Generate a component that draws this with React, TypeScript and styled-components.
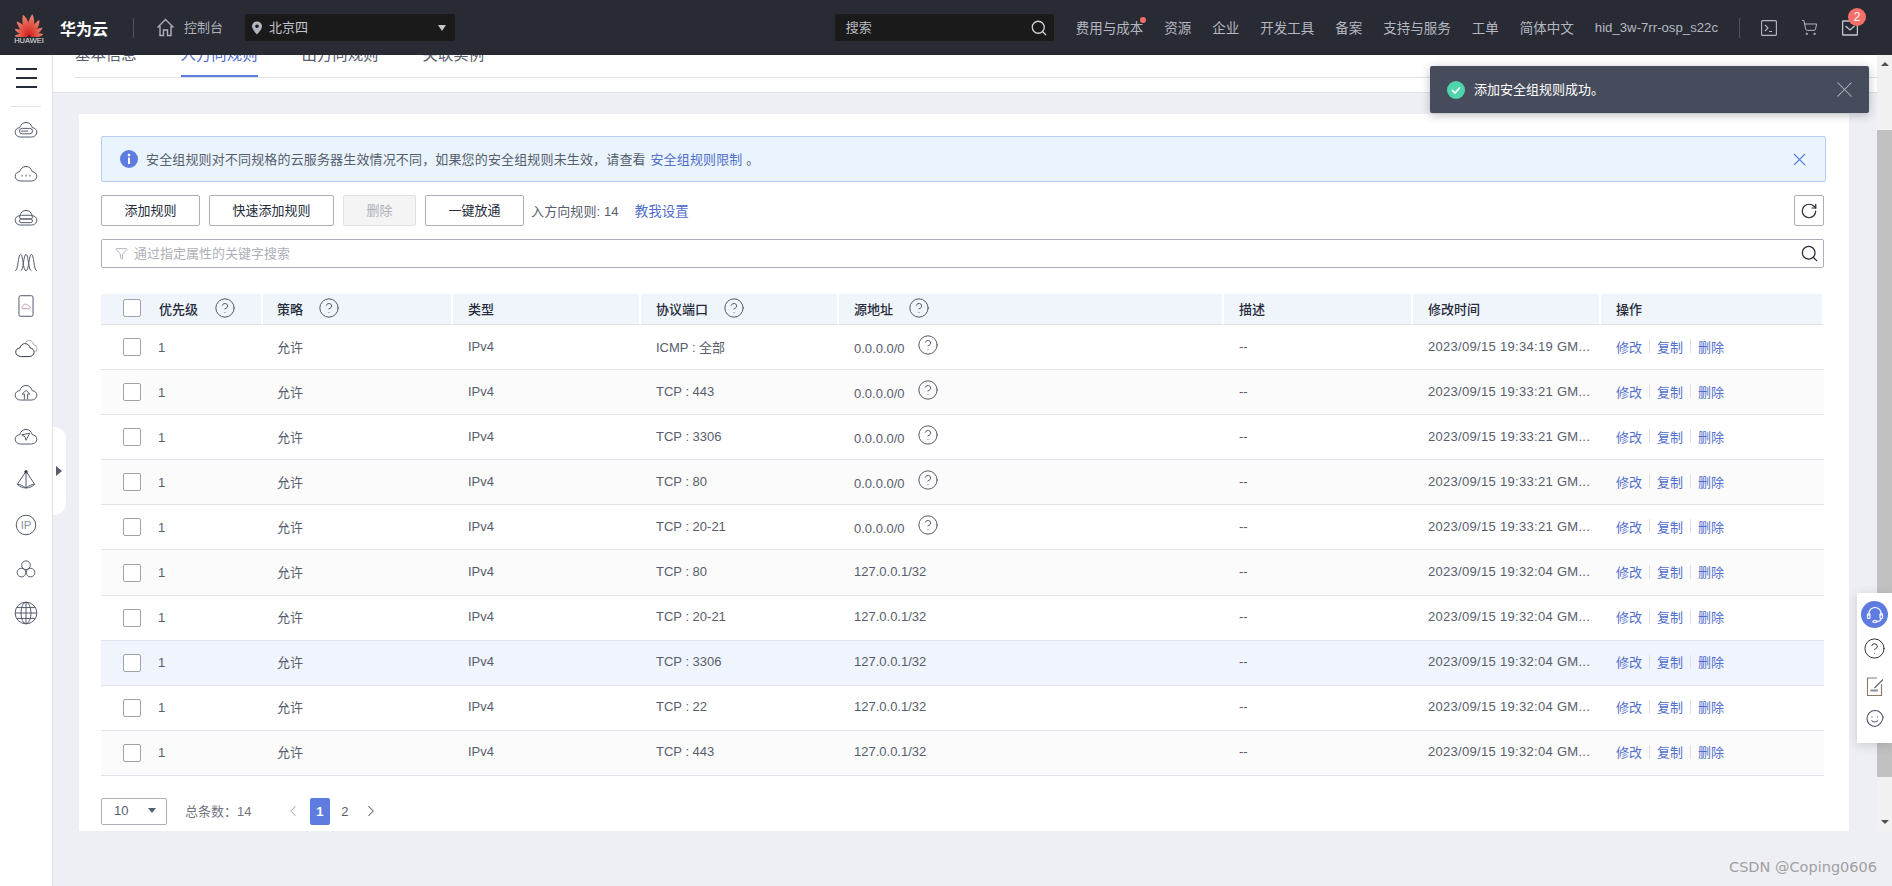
import React from "react";
import styled, { createGlobalStyle } from "styled-components";
import { CircleHelp, Funnel, X, RotateCw, ChevronLeft, ChevronRight, Search, ShoppingCart } from "lucide-react";

const Global = createGlobalStyle`
  html, body { margin: 0; padding: 0; height: 100%; overflow: hidden; }
  body { font-family: "Liberation Sans", "Noto Sans CJK SC", sans-serif; font-size: 13px; color: #575d6c; }
  * { box-sizing: border-box; }
`;

const Page = styled.div`width: 1892px; height: 886px; display: flex; flex-direction: column; position: relative; overflow: hidden; background: #eeeff4;`;

/* header */
const Header = styled.header`height: 55px; flex: none; background: #282b33; display: flex; align-items: center; padding: 0 34px 0 15px; position: relative; z-index: 3;`;
const Logo = styled.div`width: 28px; display: flex; flex-direction: column; align-items: center; margin-top: 2px;`;
const LogoWord = styled.span`font-size: 7.5px; line-height: 8px; color: #e8e8e8; letter-spacing: 0;`;
const Brand = styled.span`font-size: 16px; font-weight: 700; color: #fff; margin-left: 17px;`;
const VSep = styled.span<{ $ml: number }>`width: 1px; height: 20px; background: #4f535e; margin-left: ${p => p.$ml}px; flex: none;`;
const ConsoleLink = styled.span`display: flex; align-items: center; gap: 9px; margin-left: 22px; color: #aeb1ba; font-size: 13px;`;
const LiftedText = styled.span`margin-bottom: 2px;`;
const RegionSelect = styled.div`width: 210px; height: 27px; margin-left: 22px; background: #1a1a1a; border-radius: 2px; display: flex; align-items: center; padding: 0 9px 0 6px; color: #c4c6cc; font-size: 13px; gap: 6px;`;
const Caret = styled.span`margin-left: auto; width: 0; height: 0; border-left: 4px solid transparent; border-right: 4px solid transparent; border-top: 6px solid #c4c6cc;`;
const TopSearch = styled.div`width: 219px; height: 27px; margin-left: auto; background: #1a1a1a; border-radius: 2px; display: flex; align-items: center; justify-content: space-between; padding: 0 6px 0 11px; color: #b9bbc2; font-size: 13px;`;
const Nav = styled.nav`display: flex; align-items: center; gap: 21px; margin-left: 22px; color: #b4b7c0; font-size: 13.5px; white-space: nowrap;`;
const NavItem = styled.span`position: relative; margin-bottom: 1px;`;
const Account = styled(NavItem)`font-size: 13.2px;`;
const Dot = styled.i`position: absolute; right: -3px; top: 0px; width: 6px; height: 6px; border-radius: 50%; background: #f66f6a;`;
const TopIcons = styled.div`display: flex; align-items: center; gap: 24px; margin-left: 21px;`;
const IconWrap = styled.span`position: relative; display: flex; color: #b4b7c0;`;
const Badge = styled.i`position: absolute; left: 6px; top: -12px; width: 18px; height: 18px; border-radius: 50%; background: #f66f6a; color: #fff; font-style: normal; font-size: 12px; line-height: 18px; text-align: center;`;

/* body */
const Body = styled.div`flex: 1; display: flex; min-height: 0;`;
const Sidebar = styled.aside`width: 53px; flex: none; background: #fff; border-right: 1px solid #dfe1e6; display: flex; flex-direction: column; align-items: center; padding-top: 13px;`;
const Burger = styled.div`width: 21px; height: 20px; display: flex; flex-direction: column; justify-content: space-between;`;
const BurgerBar = styled.i`display: block; height: 2px; background: #252b3a;`;
const SideRule = styled.div`width: 30px; height: 1px; background: #dfe1e6; margin: 18px 0 1px;`;
const SideSlot = styled.div`height: 43.9px; width: 100%; display: flex; align-items: center; justify-content: center;`;

const Main = styled.main`flex: 1; min-width: 0; display: flex; flex-direction: column;`;
const TabsBar = styled.div`height: 37px; flex: none; background: #fff; border-bottom: 1px solid #dfe1e6; padding-left: 22px; overflow: hidden; box-sizing: content-box;`;
const TabStrip = styled.div`height: 23px; display: flex; gap: 44px; border-bottom: 1px solid #dfe1e6;`;
const Tab = styled.div<{ $on?: boolean }>`height: 29px; margin-top: -7px; font-size: 15.4px; line-height: 14px; white-space: nowrap; color: ${p => (p.$on ? "#526ecc" : "#575d6c")}; border-bottom: 2px solid ${p => (p.$on ? "#5e7ce0" : "transparent")};`;

const Content = styled.div`flex: 1; padding: 21px 28px 0 26px; min-height: 0;`;
const Card = styled.section`background: #fff; height: 717px; padding: 22px 25px 0 22px;`;

const Alert = styled.div`height: 46px; margin-right: -2px; background: #e9f4fe; border: 1px solid #b9cbf5; border-radius: 2px; display: flex; align-items: center; padding: 0 15px 0 18px; gap: 8px;`;
const AlertText = styled.span`flex: 1; font-size: 13px; letter-spacing: 0.15px; margin-bottom: 2px;`;
const TextLink = styled.a`color: #526ecc;`;
const AlertLink = styled(TextLink)`margin-left: 1px;`;

const Toolbar = styled.div`display: flex; align-items: center; gap: 9px; margin-top: 13px; height: 31px;`;
const Btn = styled.button<{ $off?: boolean }>`height: 31px; padding: 0 22.5px 3px; font: inherit; border-radius: 2px; white-space: nowrap; background: ${p => (p.$off ? "#f4f4f4" : "#fff")}; border: 1px solid ${p => (p.$off ? "#dfe1e6" : "#adb0b8")}; color: ${p => (p.$off ? "#adb0b8" : "#252b3a")};`;
const Count = styled.span`margin: 0 0 1px -2px; letter-spacing: 0.1px;`;
const HelpLink = styled(TextLink)`margin: 0 0 1px 7px; font-size: 13.5px;`;
const RefreshBtn = styled.button`margin-left: auto; width: 30px; height: 31px; border: 1px solid #adb0b8; border-radius: 2px; background: #fff; display: flex; align-items: center; justify-content: center; padding: 0; color: #252b3a;`;

const FilterBox = styled.div`height: 29px; margin-top: 13px; border: 1px solid #adb0b8; border-radius: 2px; display: flex; align-items: center; padding: 0 4px 0 13px; gap: 6px; color: #adb0b8;`;
const Placeholder = styled.span`flex: 1; margin-bottom: 2px;`;

const Table = styled.table`width: 1723px; margin-top: 26px; border-collapse: separate; border-spacing: 0; table-layout: fixed;`;
const HeadCell = styled.th`height: 31px; background: #f0f4fb; border-right: 2px solid #fff; border-bottom: 1px solid #dfe1e6; padding: 0 0 2px 15px; text-align: left; font-weight: 500; color: #252b3a; white-space: nowrap; &:nth-child(2) { padding-left: 14px; }`;
const Cell = styled.td`height: 45.1px; border-bottom: 1px solid #e3e3ec; padding: 0 0 2px 15px; white-space: nowrap; &:nth-child(2) { padding-left: 14px; }`;
const Row = styled.tr<{ $tone: string }>`background: ${p => p.$tone};`;
const CellFlex = styled.div<{ $gap: number }>`display: flex; align-items: center; gap: ${p => p.$gap}px;`;
const PriorityCell = styled(CellFlex)`margin-top: 2px;`;
const Check = styled.span`display: block; width: 18px; height: 18px; flex: none; margin-left: 7px; border: 1px solid #9fa2ab; border-radius: 2px; background: #fff;`;
const HelpDot = styled.span<{ $lift?: boolean }>`display: flex; color: #4c5263; margin-left: -2px; margin-bottom: ${p => (p.$lift ? 2 : 0)}px;`;
const SourceText = styled.span<{ $low?: boolean }>`margin-top: ${p => (p.$low ? 5 : 0)}px;`;
const TimeText = styled.span`letter-spacing: 0.3px;`;
const Ops = styled.div`display: flex; align-items: center;`;
const OpSep = styled.i`width: 1px; height: 14px; background: #dfe1e6; margin: 0 7px;`;

const Pager = styled.div`display: flex; align-items: center; height: 27px; margin-top: 22px;`;
const SizeSelect = styled.div`width: 66px; height: 27px; border: 1px solid #adb0b8; border-radius: 2px; display: flex; align-items: center; justify-content: space-between; padding: 0 10px 1px 12px; color: #575d6c;`;
const SmallCaret = styled.i`width: 0; height: 0; border-left: 4px solid transparent; border-right: 4px solid transparent; border-top: 5px solid #575d6c;`;
const Total = styled.span`margin: 0 0 2px 18px; color: #71757f;`;
const PageCtl = styled.span<{ $dim?: boolean }>`display: flex; margin: 0 5px; color: ${p => (p.$dim ? "#adb0b8" : "#575d6c")};`;
const PageNo = styled.span<{ $on?: boolean }>`width: 20px; height: 27px; margin: 0 2.5px; border-radius: 2px; display: flex; align-items: center; justify-content: center; background: ${p => (p.$on ? "#5e7ce0" : "transparent")}; color: ${p => (p.$on ? "#fff" : "#575d6c")}; font-weight: ${p => (p.$on ? 700 : 400)};`;
const PagerNav = styled.div`display: flex; align-items: center; margin-left: 28px;`;

const Scrollbar = styled.div`width: 15px; flex: none; height: 776px; background: #f1f1f1; display: flex; flex-direction: column; align-items: center;`;
const ScrollArrow = styled.i<{ $down?: boolean }>`width: 0; height: 0; flex: none; border-left: 4px solid transparent; border-right: 4px solid transparent; ${p => (p.$down ? "border-top: 4px solid #505050; margin-top: 43px;" : "border-bottom: 4px solid #505050; margin: 7px 0 64px;")}`;
const ScrollThumb = styled.div`width: 100%; height: 647px; flex: none; background: #c1c1c1;`;

/* overlays */
const Toast = styled.div`position: absolute; left: 1430px; top: 66px; width: 439px; height: 47px; background: #474c5c; border-radius: 2px; box-shadow: 0 2px 10px rgba(37, 43, 58, 0.3); display: flex; align-items: center; padding: 0 11px 0 17px; color: #fff; z-index: 4;`;
const ToastText = styled.span`flex: 1; margin: 0 0 3px 9px; font-size: 13px;`;
const EdgeToggle = styled.div`position: absolute; left: 53px; top: 427px; width: 13px; height: 88px; background: #fff; border-radius: 0 12px 12px 0; display: flex; align-items: center; padding-left: 3px;`;
const EdgeArrow = styled.i`width: 0; height: 0; border-top: 5px solid transparent; border-bottom: 5px solid transparent; border-left: 6px solid #575d6c;`;
const FloatPanel = styled.div`position: absolute; left: 1857px; top: 593px; width: 35px; height: 150px; background: #fff; box-shadow: 0 2px 10px rgba(37, 43, 58, 0.18); display: flex; flex-direction: column; align-items: center; padding-top: 8px; z-index: 2;`;
const FloatCircle = styled.div`width: 27px; height: 27px; border-radius: 50%; background: #5e7ce0; display: flex; align-items: center; justify-content: center;`;
const FloatIcon = styled.div<{ $mt: number }>`display: flex; margin-top: ${p => p.$mt}px;`;
const Watermark = styled.div`position: absolute; right: 15px; top: 858px; font-family: "DejaVu Sans", sans-serif; font-size: 14.5px; line-height: 18px; color: #a0a0a2; z-index: 2;`;

const petals: [number, number][] = [[-84, 0.85], [-60, 0.95], [-36, 1.15], [-12, 1.35], [12, 1.35], [36, 1.15], [60, 0.95], [84, 0.85]];
const Petals = () => (
  <svg width="28" height="25" viewBox="0 0 28 25">
    <defs>
      <linearGradient id="petal" x1="0" y1="0" x2="0" y2="1">
        <stop offset="0" stopColor="#f08a72" />
        <stop offset="1" stopColor="#d31f1b" />
      </linearGradient>
    </defs>
    {petals.map(([a, s]) => (
      <path key={a} transform={`translate(14 24.5) rotate(${a}) translate(0 -1) scale(${s})`} d="M0 0C-3.2-4-3.4-10-1.1-16C2.4-12 3.2-4.5 0 0Z" fill="url(#petal)" />
    ))}
  </svg>
);

const CLOUD = "M7 18.5C3.8 18.5 2 16.3 2 14C2 11.6 3.9 9.9 6.2 9.9C7 7 9.2 5 12 5C14.8 5 17 7 17.8 9.9C20.1 9.9 22 11.6 22 14C22 16.3 20.2 18.5 17 18.5Z";
const side = { fill: "none", stroke: "#50576b", strokeWidth: 0.9 };
const SideSvg = ({ children }: { children: React.ReactNode }) => (
  <svg width="26" height="26" viewBox="0 0 24 24" {...side}>{children}</svg>
);
const sideIcons: React.ReactNode[] = [
  <SideSvg key="a"><path d={CLOUD} /><rect x="6" y="10.5" width="12" height="5" rx="2.5" /><path d="M7.5 13H14" /></SideSvg>,
  <SideSvg key="b"><path d={CLOUD} /><path d="M8 13.5h.9M11.6 13.5h.9M15.2 13.5h.9" strokeWidth="1.4" /></SideSvg>,
  <SideSvg key="c"><path d={CLOUD} /><rect x="6" y="9.5" width="12" height="3.4" rx="1.7" /><rect x="6" y="12.9" width="12" height="3.4" rx="1.7" /></SideSvg>,
  <SideSvg key="d"><path d="M2 20C5 20 4.5 5 7 5S9 20 12 20M7 20C10 20 9.5 5 12 5S14 20 17 20M12 20C15 20 14.5 5 17 5S19 20 22 20" /></SideSvg>,
  <SideSvg key="e"><rect x="5.5" y="2.5" width="13" height="19" rx="1.5" /><path d="M9 14.5C7.6 14.5 7.6 12.4 9 12.2C9.4 9.7 13.6 9.7 14.6 12.2C16.4 12.3 16.4 14.5 15 14.5Z" stroke="#c49aa8" /></SideSvg>,
  <SideSvg key="f"><path d="M8 19C4.5 19 2.5 17 2.5 15C2.5 12.8 4 11.2 6.2 11.2C7 8.5 9 7 11 7C13.4 7 15.2 8.6 16 11.2C18 11.2 19.5 12.8 19.5 15C19.5 17 17.5 19 15 19Z" stroke="#2f3547" /><path d="M11 7C11.8 5 13.5 4 15.5 4.2C17.5 4.4 18.5 6 19 8C21 8.2 22 10 22 11.8C22 13.5 21 15 19.5 15.6" stroke="#a6a9b3" /></SideSvg>,
  <SideSvg key="g"><path d={CLOUD} /><path d="M10.5 18V13H8.5L12 9.5L15.5 13H13.5V18" /></SideSvg>,
  <SideSvg key="h"><path d={CLOUD} /><path d="M8 10L15.5 8.5L12 15L11 11.8Z" /></SideSvg>,
  <SideSvg key="i"><path d="M12 3L4 15C8 19.5 16 19.5 20 15ZM12 3V18.5M4 15C7 15 9 16.5 12 18.5C15 16.5 17 15 20 15" /><circle cx="12" cy="3.5" r="1.2" fill="#252b3a" /></SideSvg>,
  <SideSvg key="j"><circle cx="12" cy="12" r="9" /><text x="12" y="15.7" textAnchor="middle" fontSize="10.5" stroke="none" fill="#8a8fa0" fontFamily="Liberation Sans">IP</text></SideSvg>,
  <SideSvg key="k"><circle cx="12" cy="8.5" r="4" /><circle cx="7.8" cy="15.3" r="4" /><circle cx="16.2" cy="15.3" r="4" /></SideSvg>,
  <SideSvg key="l"><circle cx="12" cy="12" r="10" /><ellipse cx="12" cy="12" rx="4.6" ry="10" /><path d="M2 12H22M3.4 7H20.6M3.4 17H20.6M12 2V22" /></SideSvg>,
];

type R = { port: string; src: string; time: string; help?: boolean };
const rows: R[] = [
  { port: "ICMP : 全部", src: "0.0.0.0/0", time: "2023/09/15 19:34:19 GM...", help: true },
  { port: "TCP : 443", src: "0.0.0.0/0", time: "2023/09/15 19:33:21 GM...", help: true },
  { port: "TCP : 3306", src: "0.0.0.0/0", time: "2023/09/15 19:33:21 GM...", help: true },
  { port: "TCP : 80", src: "0.0.0.0/0", time: "2023/09/15 19:33:21 GM...", help: true },
  { port: "TCP : 20-21", src: "0.0.0.0/0", time: "2023/09/15 19:33:21 GM...", help: true },
  { port: "TCP : 80", src: "127.0.0.1/32", time: "2023/09/15 19:32:04 GM..." },
  { port: "TCP : 20-21", src: "127.0.0.1/32", time: "2023/09/15 19:32:04 GM..." },
  { port: "TCP : 3306", src: "127.0.0.1/32", time: "2023/09/15 19:32:04 GM..." },
  { port: "TCP : 22", src: "127.0.0.1/32", time: "2023/09/15 19:32:04 GM..." },
  { port: "TCP : 443", src: "127.0.0.1/32", time: "2023/09/15 19:32:04 GM..." },
];
const colWidths = [162, 190, 188, 198, 385, 189, 188, 223];
const navItems = ["资源", "企业", "开发工具", "备案", "支持与服务", "工单", "简体中文"];
const toneOf = (i: number) => (i === 7 ? "#f0f4fc" : i % 2 ? "#fbfbfb" : "#fff");
const Q = ({ lift }: { lift?: boolean }) => <HelpDot $lift={lift}><CircleHelp size={22} strokeWidth={1.05} /></HelpDot>;

export default function App() {
  return (
    <Page>
      <Global />
      <Header>
        <Logo><Petals /><LogoWord>HUAWEI</LogoWord></Logo>
        <Brand>华为云</Brand>
        <VSep $ml={25} />
        <ConsoleLink>
          <svg width="19" height="19" viewBox="0 0 18 19" fill="none" stroke="#aeb1ba" strokeWidth="1.4"><path d="M1 9.5L9 1.5L17 9.5M3.5 8V17.5H7V12H11V17.5H14.5V8" /></svg>
          <LiftedText>控制台</LiftedText>
        </ConsoleLink>
        <RegionSelect>
          <svg width="12" height="14" viewBox="0 0 12 14"><path d="M6 0.5C3 0.5 1 2.7 1 5.3C1 8.5 6 13.5 6 13.5S11 8.5 11 5.3C11 2.7 9 0.5 6 0.5Z" fill="#b3b6bf" /><circle cx="6" cy="5.2" r="1.8" fill="#1a1a1a" /></svg>
          <LiftedText>北京四</LiftedText>
          <Caret />
        </RegionSelect>
        <TopSearch><LiftedText>搜索</LiftedText><Search size={18} strokeWidth={1.7} color="#d0d2d8" /></TopSearch>
        <Nav>
          <NavItem>费用与成本<Dot /></NavItem>
          {navItems.map(n => <NavItem key={n}>{n}</NavItem>)}
          <Account>hid_3w-7rr-osp_s22c</Account>
        </Nav>
        <VSep $ml={21} />
        <TopIcons>
          <IconWrap><svg width="16" height="16" viewBox="0 0 16 16" fill="none" stroke="#b4b7c0" strokeWidth="1.1"><rect x="0.6" y="0.6" width="14.8" height="14.8" rx="1" /><path d="M4 5L7 8L4 11M8 11.5H11" /></svg></IconWrap>
          <IconWrap><ShoppingCart size={17} strokeWidth={1.4} /></IconWrap>
          <IconWrap>
            <svg width="16" height="16" viewBox="0 0 16 16" fill="none" stroke="#c4c6cc" strokeWidth="1.3"><rect x="0.6" y="1" width="14.8" height="14" rx="0.5" /><path d="M3.5 6L8 10L12.5 6" /></svg>
            <Badge>2</Badge>
          </IconWrap>
        </TopIcons>
      </Header>
      <Body>
        <Sidebar>
          <Burger><BurgerBar /><BurgerBar /><BurgerBar /></Burger>
          <SideRule />
          {sideIcons.map((ic, i) => <SideSlot key={i}>{ic}</SideSlot>)}
        </Sidebar>
        <Main>
          <TabsBar>
            <TabStrip>
              <Tab>基本信息</Tab>
              <Tab $on>入方向规则</Tab>
              <Tab>出方向规则</Tab>
              <Tab>关联实例</Tab>
            </TabStrip>
          </TabsBar>
          <Content>
            <Card>
              <Alert>
                <svg width="18" height="18" viewBox="0 0 18 18"><circle cx="9" cy="9" r="9" fill="#5e7ce0" /><rect x="8" y="7.5" width="2" height="6.5" fill="#fff" /><circle cx="9" cy="5" r="1.3" fill="#fff" /></svg>
                <AlertText>安全组规则对不同规格的云服务器生效情况不同，如果您的安全组规则未生效，请查看 <AlertLink>安全组规则限制</AlertLink> 。</AlertText>
                <X size={21} strokeWidth={1.3} color="#5e7ce0" />
              </Alert>
              <Toolbar>
                <Btn>添加规则</Btn>
                <Btn>快速添加规则</Btn>
                <Btn $off>删除</Btn>
                <Btn>一键放通</Btn>
                <Count>入方向规则: 14</Count>
                <HelpLink>教我设置</HelpLink>
                <RefreshBtn><RotateCw size={18} strokeWidth={1.6} /></RefreshBtn>
              </Toolbar>
              <FilterBox>
                <Funnel size={13} strokeWidth={1.2} color="#8a8e99" />
                <Placeholder>通过指定属性的关键字搜索</Placeholder>
                <Search size={19} strokeWidth={1.6} color="#252b3a" />
              </FilterBox>
              <Table>
                <colgroup>{colWidths.map((w, i) => <col key={i} width={w} />)}</colgroup>
                <thead>
                  <tr>
                    <HeadCell><CellFlex $gap={18}><Check />优先级<Q /></CellFlex></HeadCell>
                    <HeadCell><CellFlex $gap={17}>策略<Q /></CellFlex></HeadCell>
                    <HeadCell>类型</HeadCell>
                    <HeadCell><CellFlex $gap={17}>协议端口<Q /></CellFlex></HeadCell>
                    <HeadCell><CellFlex $gap={17}>源地址<Q /></CellFlex></HeadCell>
                    <HeadCell>描述</HeadCell>
                    <HeadCell>修改时间</HeadCell>
                    <HeadCell>操作</HeadCell>
                  </tr>
                </thead>
                <tbody>
                  {rows.map((r, i) => (
                    <Row key={i} $tone={toneOf(i)}>
                      <Cell><PriorityCell $gap={17}><Check />1</PriorityCell></Cell>
                      <Cell>允许</Cell>
                      <Cell>IPv4</Cell>
                      <Cell>{r.port}</Cell>
                      <Cell>
                        <CellFlex $gap={14}>
                          <SourceText $low={r.help}>{r.src}</SourceText>
                          {r.help && <Q lift />}
                        </CellFlex>
                      </Cell>
                      <Cell>--</Cell>
                      <Cell><TimeText>{r.time}</TimeText></Cell>
                      <Cell>
                        <Ops><TextLink>修改</TextLink><OpSep /><TextLink>复制</TextLink><OpSep /><TextLink>删除</TextLink></Ops>
                      </Cell>
                    </Row>
                  ))}
                </tbody>
              </Table>
              <Pager>
                <SizeSelect>10<SmallCaret /></SizeSelect>
                <Total>总条数：14</Total>
                <PagerNav>
                  <PageCtl $dim><ChevronLeft size={18} strokeWidth={1.4} /></PageCtl>
                  <PageNo $on>1</PageNo>
                  <PageNo>2</PageNo>
                  <PageCtl><ChevronRight size={18} strokeWidth={1.4} /></PageCtl>
                </PagerNav>
              </Pager>
            </Card>
          </Content>
        </Main>
        <Scrollbar>
          <ScrollArrow />
          <ScrollThumb />
          <ScrollArrow $down />
        </Scrollbar>
      </Body>

      <EdgeToggle><EdgeArrow /></EdgeToggle>
      <Toast>
        <svg width="18" height="18" viewBox="0 0 18 18"><circle cx="9" cy="9" r="9" fill="#50d4ab" /><path d="M5 9.2L8 12L13 6.5" fill="none" stroke="#fff" strokeWidth="1.8" /></svg>
        <ToastText>添加安全组规则成功。</ToastText>
        <X size={27} strokeWidth={0.9} color="#b5b8c0" />
      </Toast>
      <FloatPanel>
        <FloatCircle>
          <svg width="20" height="20" viewBox="0 0 20 20" fill="none" stroke="#fff" strokeWidth="1.2"><path d="M4 11V8.5C4 5 6.7 2.5 10 2.5S16 5 16 8.5V11" /><rect x="2.5" y="8.5" width="2.5" height="5" rx="1" /><rect x="15" y="8.5" width="2.5" height="5" rx="1" /><path d="M16 13.5C16 15.5 14 16.5 11.5 16.5" /><rect x="8" y="15.5" width="4" height="2" rx="1" /></svg>
        </FloatCircle>
        <FloatIcon $mt={9}><CircleHelp size={23} strokeWidth={1} color="#252b3a" /></FloatIcon>
        <FloatIcon $mt={16.5}>
          <svg width="18" height="20" viewBox="0 0 18 20" fill="none" stroke="#5a5f6d" strokeWidth="1.1"><path d="M11 1H1.5V18.5H15.5V7" stroke="#8a7a64" /><path d="M8.5 11L17 2.5" /><path d="M4.5 13.5H12" stroke="#8a8e99" strokeWidth="2" /></svg>
        </FloatIcon>
        <FloatIcon $mt={12.5}>
          <svg width="20" height="19" viewBox="0 0 20 19" fill="none" stroke="#4b5164" strokeWidth="1.1"><path d="M18 9.5C18 5 14.4 1.5 10 1.5S2 5 2 9.5S5.6 17.5 10 17.5C13 17.5 17 14 18.5 7.5" /><path d="M7 7.5V8.5M12.5 7.5V8.5" /><path d="M6.5 11.5C8 13.5 11.5 13.5 13 11.5" /></svg>
        </FloatIcon>
      </FloatPanel>
      <Watermark>CSDN @Coping0606</Watermark>
    </Page>
  );
}
